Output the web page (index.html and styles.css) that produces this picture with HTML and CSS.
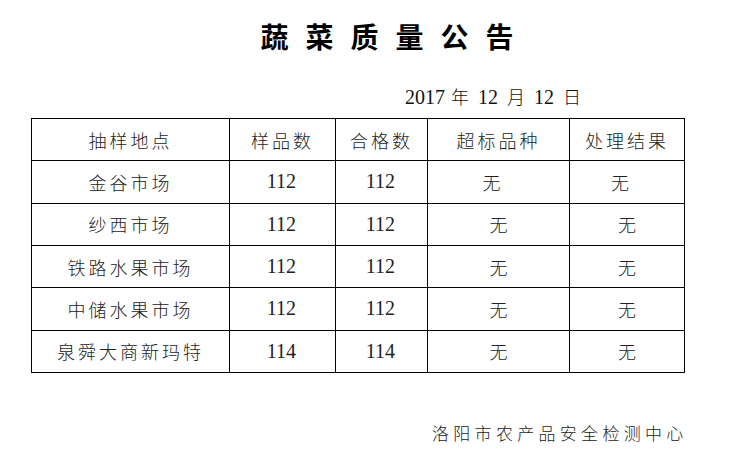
FILE: index.html
```html
<!DOCTYPE html>
<html lang="zh-CN">
<head>
<meta charset="utf-8">
<title>蔬菜质量公告</title>
<link rel="stylesheet" href="styles.css">
</head>
<body>
<div class="page">
  <h1 class="title">蔬菜质量公告</h1>
  <div class="date"><span class="num">2017</span><span class="cj first">年</span><span class="num">12</span><span class="cj">月</span><span class="num">12</span><span class="cj">日</span></div>
  <table class="report">
    <colgroup>
      <col class="c1"><col class="c2"><col class="c3"><col class="c4"><col class="c5">
    </colgroup>
    <thead>
      <tr><th>抽样地点</th><th>样品数</th><th>合格数</th><th>超标品种</th><th>处理结果</th></tr>
    </thead>
    <tbody>
      <tr><td class="place">金谷市场</td><td class="num">112</td><td class="num">112</td><td class="none shift-l">无</td><td class="none shift-l">无</td></tr>
      <tr><td class="place">纱西市场</td><td class="num">112</td><td class="num">112</td><td class="none">无</td><td class="none">无</td></tr>
      <tr><td class="place">铁路水果市场</td><td class="num">112</td><td class="num">112</td><td class="none">无</td><td class="none">无</td></tr>
      <tr><td class="place">中储水果市场</td><td class="num">112</td><td class="num">112</td><td class="none">无</td><td class="none">无</td></tr>
      <tr><td class="place">泉舜大商新玛特</td><td class="num">114</td><td class="num">114</td><td class="none">无</td><td class="none">无</td></tr>
    </tbody>
  </table>
  <div class="footer">洛阳市农产品安全检测中心</div>
</div>
</body>
</html>
```

FILE: styles.css
```css
html, body {
  margin: 0;
  padding: 0;
  background: #ffffff;
}
.page {
  width: 753px;
  height: 459px;
  overflow: hidden;
  color: #111111;
  font-family: "Noto Sans CJK SC", sans-serif;
}
.title {
  margin: 0;
  padding: 17px 0 0 38px;
  height: 38px;
  line-height: 38px;
  text-align: center;
  font-size: 28px;
  font-weight: 700;
  letter-spacing: 17px;
  color: #000000;
}
.date {
  padding: 29px 0 0 405px;
  height: 34px;
  line-height: 24px;
  font-size: 18px;
  font-weight: 300;
  color: #111111;
}
.date .num {
  font-family: "Liberation Serif", serif;
  font-size: 20px;
}
.date .cj {
  margin: 0 9px;
}
.date .cj.first {
  margin-left: 6px;
}
.report {
  margin-left: 31px;
  border-collapse: collapse;
  table-layout: fixed;
  width: 653px;
}
.c1 { width: 198px; }
.c2 { width: 106px; }
.c3 { width: 92px; }
.c4 { width: 142px; }
.c5 { width: 115px; }
.report th, .report td {
  border: 1px solid #000000;
  height: 41.33px;
  padding: 0;
  text-align: center;
  vertical-align: middle;
  font-size: 18px;
  font-weight: 300;
  color: #222222;
  letter-spacing: 3px;
}
.report td.num {
  font-family: "Liberation Serif", serif;
  font-size: 20px;
  letter-spacing: 0;
  padding-right: 2px;
}
.report td.none {
  letter-spacing: 0;
}
.report td.shift-l {
  padding-right: 14px;
}
.footer {
  padding: 48px 0 0 432px;
  font-size: 17px;
  font-weight: 300;
  letter-spacing: 4.3px;
  line-height: 24px;
  color: #222222;
}
```
